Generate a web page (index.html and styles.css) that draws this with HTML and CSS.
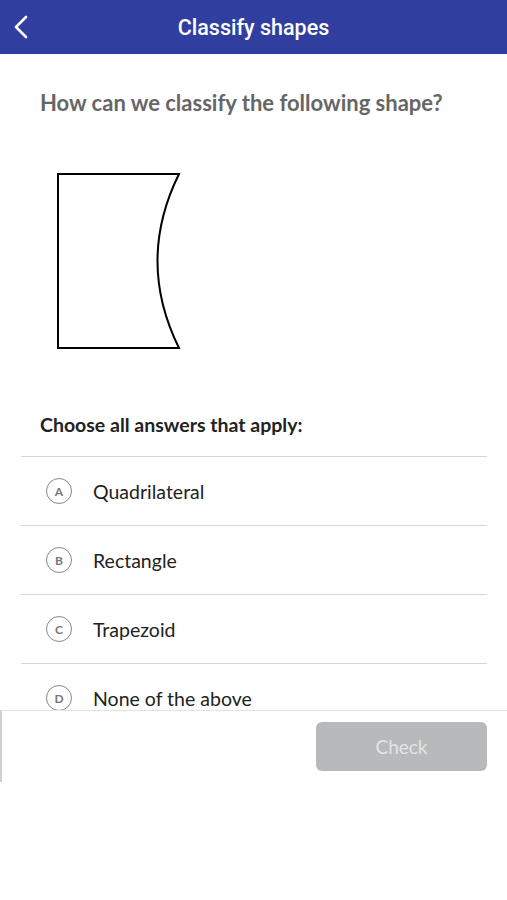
FILE: index.html
```html
<!DOCTYPE html>
<html lang="en">
<head>
<meta charset="UTF-8">
<meta name="viewport" content="width=device-width, initial-scale=1.0">
<title>Classify shapes</title>
<link rel="stylesheet" href="styles.css">
</head>
<body>

<header class="topbar">
  <button class="back-btn" aria-label="Back">
    <svg width="16" height="24" viewBox="0 0 16 24">
      <path d="M13 2 L3 12 L13 22" fill="none" stroke="#fff" stroke-width="2.6" stroke-linecap="round" stroke-linejoin="round"/>
    </svg>
  </button>
  <h1 class="title">Classify shapes</h1>
</header>

<main class="content">
  <p class="question">How can we classify the following shape?</p>

  <div class="figure">
    <svg width="130" height="180" viewBox="0 0 130 180">
      <path d="M2 2 L123 2 Q 80 89 123 176 L2 176 Z" fill="none" stroke="#000" stroke-width="2" stroke-linejoin="miter"/>
    </svg>
  </div>

  <p class="prompt">Choose all answers that apply:</p>

  <ul class="answers">
    <li class="answer"><span class="letter">A</span><span class="label">Quadrilateral</span></li>
    <li class="answer"><span class="letter">B</span><span class="label">Rectangle</span></li>
    <li class="answer"><span class="letter">C</span><span class="label">Trapezoid</span></li>
    <li class="answer"><span class="letter">D</span><span class="label">None of the above</span></li>
  </ul>
</main>

<footer class="actions">
  <button class="check-btn" disabled>Check</button>
</footer>

</body>
</html>
```

FILE: styles.css
```css
body {
  margin: 0;
  font-family: Lato, "Open Sans", sans-serif;
  background-color: #fff;
}

.topbar {
  height: 54px;
  background-color: #303f9f;
  display: flex;
  align-items: center;
  justify-content: center;
  position: relative;
}

.back-btn {
  position: absolute;
  left: 13px;
  top: 15px;
  padding: 0;
  border: none;
  background: none;
}

.title {
  margin: 0;
  font-family: Roboto, Inter, sans-serif;
  font-size: 21.5px;
  font-weight: 500;
  color: #fff;
}

.content {
  height: 656px;
  overflow: hidden;
  padding: 0 20px 0 21px;
}

.question {
  margin: 35px 0 0 19px;
  font-size: 22px;
  line-height: 28px;
  font-weight: 700;
  color: #666;
}

.figure {
  margin: 55px 0 0 35px;
  height: 180px;
}

.figure svg {
  display: block;
}

.prompt {
  margin: 61px 0 0 19px;
  font-size: 19.5px;
  line-height: 24px;
  font-weight: 700;
  color: #222;
}

.answers {
  list-style: none;
  margin: 19px 0 0;
  padding: 0;
}

.answer {
  height: 68px;
  border-top: 1.5px solid #d6d6d6;
  display: flex;
  align-items: center;
  gap: 21px;
  padding-left: 25px;
}

.letter {
  width: 24px;
  height: 24px;
  border: 1.5px solid #888;
  border-radius: 50%;
  display: flex;
  align-items: center;
  justify-content: center;
  font-size: 12px;
  font-weight: 700;
  color: #777;
}

.label {
  font-size: 19.5px;
  color: #222;
}

.actions {
  height: 72px;
  border-top: 1px solid #e2e2e2;
  border-left: 2px solid #d0d0d0;
  display: flex;
  justify-content: flex-end;
  align-items: flex-start;
  padding: 11px 20px 0 0;
  box-sizing: border-box;
}

.check-btn {
  width: 171px;
  height: 49px;
  border: none;
  border-radius: 6px;
  background-color: #b7b9ba;
  color: #e4e4e4;
  font-family: Lato, sans-serif;
  font-size: 19px;
}
```
